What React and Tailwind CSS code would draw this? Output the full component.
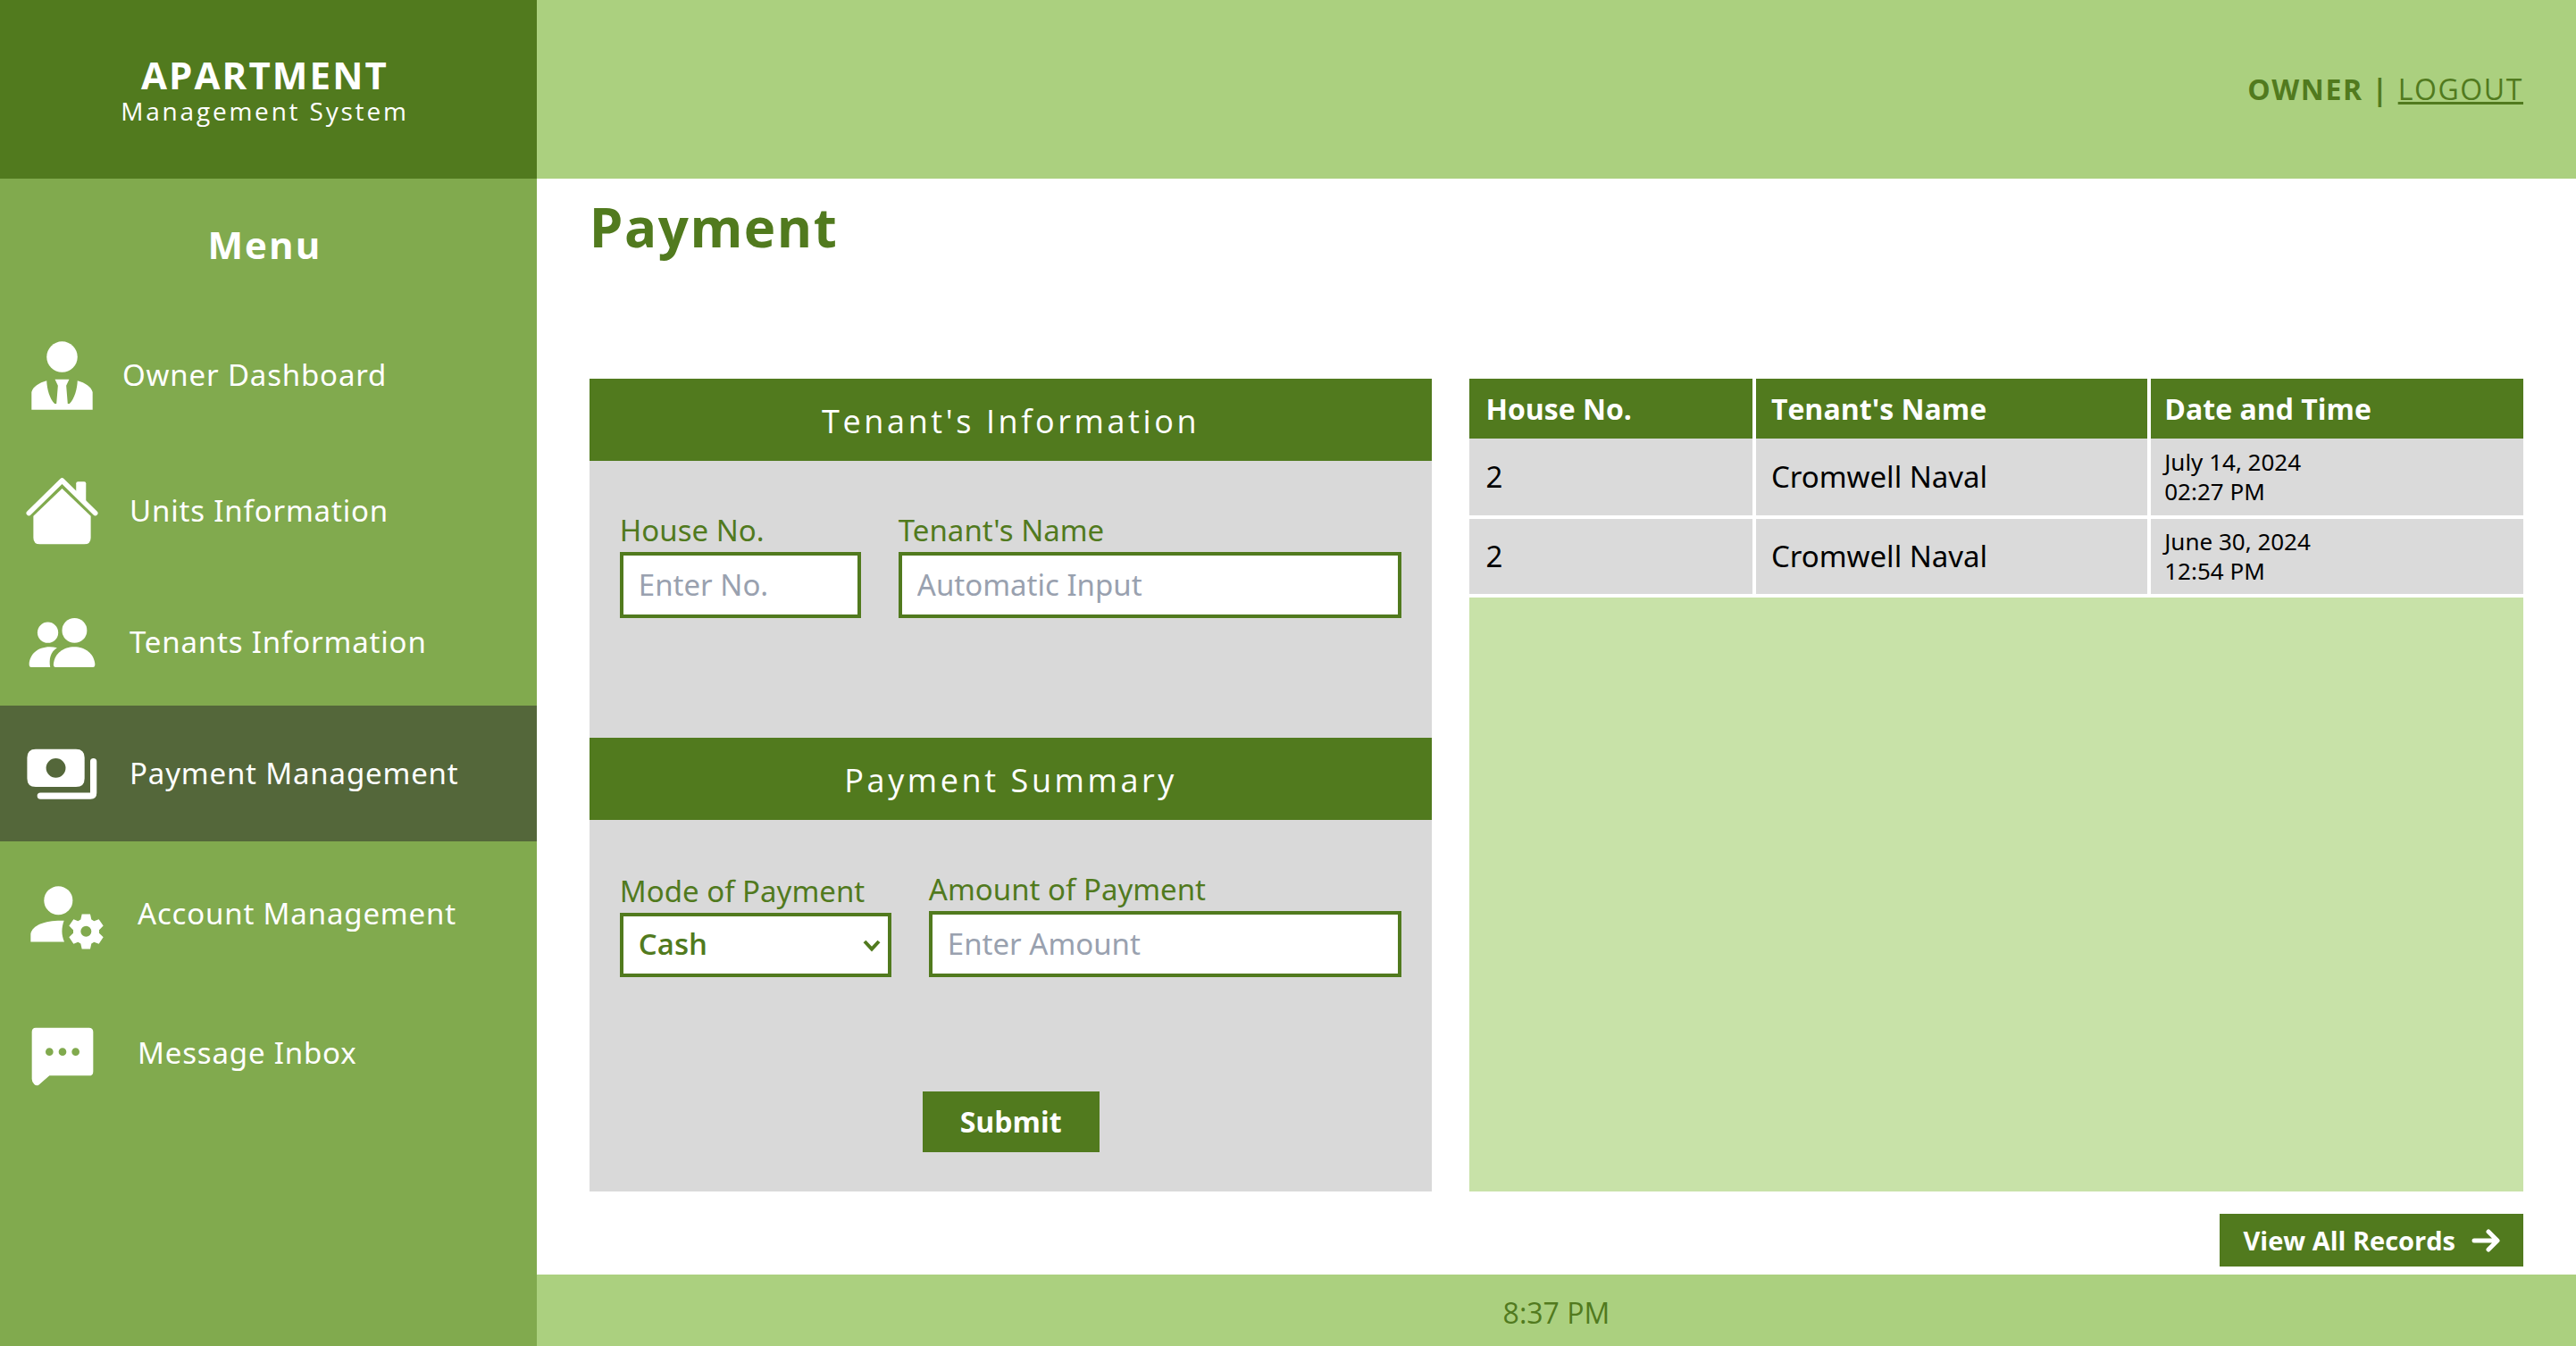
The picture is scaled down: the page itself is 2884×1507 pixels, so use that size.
import React from "react";

function OwnerIcon() {
  return (
    <svg viewBox="76 32 206 232" className="w-[69px] h-[77px]" fill="currentColor" aria-hidden="true">
      <circle cx="179" cy="85" r="52" />
      <path d="M76 263V204C80 185 102 172 127 165C128 192 137 226 154 243L160 243L165 182L155 161H203L193 182L198 243L204 243C221 226 230 192 231 165C256 172 278 185 282 204V263Z" />
    </svg>
  );
}

function HouseIcon() {
  return (
    <svg viewBox="58 494 242 224" className="w-[81px] h-[75px]" fill="currentColor" aria-hidden="true">
      <path d="M179 530L275 622V694Q275 716 253 716H105Q83 716 83 694V622Z" />
      <path d="M68 612L179 503L290 612" fill="none" stroke="currentColor" strokeWidth="17" strokeLinecap="round" strokeLinejoin="round" />
      <path d="M226 540V513Q226 507 232 507H253Q259 507 259 513V574Z" />
    </svg>
  );
}

function PeopleIcon() {
  return (
    <svg viewBox="66 26 226 170" className="w-[75px] h-[57px]" fill="currentColor" aria-hidden="true">
      <circle cx="131" cy="77" r="35" />
      <circle cx="221" cy="70" r="42" />
      <path d="M162 128C140 142 134 166 139 194H75Q68 194 68 184C70 146 105 116 162 128Z" />
      <path d="M157 194Q150 194 150 184C153 147 184 125 220 125S287 147 290 184Q290 194 283 194Z" />
    </svg>
  );
}

function MoneyIcon() {
  return (
    <svg viewBox="60 472 238 172" className="w-[79px] h-[57px]" fill="currentColor" aria-hidden="true">
      <path fillRule="evenodd" d="M90 474H226Q255 474 255 503V573Q255 602 226 602H90Q61 602 61 573V503Q61 474 90 474ZM158 505A33 33 0 1 0 158 571A33 33 0 1 0 158 505Z" />
      <path d="M274 516Q274 505 285 505T296 516V622Q296 643 275 643H106Q95 643 95 632T106 621H274Z" />
    </svg>
  );
}

function AccountIcon() {
  return (
    <svg viewBox="74 32 246 212" className="w-[82px] h-[71px]" fill="currentColor" aria-hidden="true">
      <circle cx="168" cy="80" r="48" />
      <path d="M187 148C178 172 178 196 188 219H75V192C82 162 125 146 187 148Z" />
      <path
        fillRule="evenodd"
        d="M247 126H275L279 144L288 149L304 143L319 165L305 179V190L319 203L304 226L288 220L279 225L275 243H247L243 225L234 220L219 226L204 203L218 190V179L204 165L219 143L234 149L243 144ZM261 166A18 18 0 1 0 261 202A18 18 0 1 0 261 166Z"
      />
    </svg>
  );
}

function MessageIcon() {
  return (
    <svg viewBox="74 512 210 198" className="w-[70px] h-[66px]" fill="currentColor" aria-hidden="true">
      <path
        fillRule="evenodd"
        d="M89 514H268Q282 514 282 528V661Q282 675 268 675H135L99 706Q91 711 84 704Q76 697 76 686V528Q76 514 89 514ZM135 582A13 13 0 1 0 135 608A13 13 0 1 0 135 582ZM179 582A13 13 0 1 0 179 608A13 13 0 1 0 179 582ZM223 582A13 13 0 1 0 223 608A13 13 0 1 0 223 582Z"
      />
    </svg>
  );
}

const menu = [
  { label: "Owner Dashboard", Icon: OwnerIcon, row: "h-[148px] gap-[27px]", slot: "w-[82px]" },
  { label: "Units Information", Icon: HouseIcon, row: "h-[154px] gap-[35px] pt-[2px]", slot: "w-[82px]" },
  { label: "Tenants Information", Icon: PeopleIcon, row: "h-[142px] gap-[35px]", slot: "w-[82px]" },
  { label: "Payment Management", Icon: MoneyIcon, row: "h-[152px] gap-[35px] bg-[#54673a]", slot: "w-[82px]", active: true },
  { label: "Account Management", Icon: AccountIcon, row: "h-[162px] gap-[32px]", slot: "w-[94px] pt-2" },
  { label: "Message Inbox", Icon: MessageIcon, row: "h-[150px] gap-[42px]", slot: "w-[84px] pt-2" },
];

const records = [
  { house: "2", name: "Cromwell Naval", date: "July 14, 2024", time: "02:27 PM" },
  { house: "2", name: "Cromwell Naval", date: "June 30, 2024", time: "12:54 PM" },
];

function Sidebar() {
  return (
    <aside className="w-5/24 shrink-0 bg-[#81aa4e] text-white">
      <div className="flex h-[200px] flex-col items-center justify-center bg-[#517a1e] pt-1 pr-2 font-['Open_Sans','Noto_Sans',sans-serif]">
        <p className="text-[42px] leading-[44px] font-bold tracking-wider">APARTMENT</p>
        <p className="text-[28px] leading-[36px] tracking-widest">Management System</p>
      </div>
      <h2 className="flex h-[146px] items-center justify-center pr-2 font-['Open_Sans','Noto_Sans',sans-serif] text-[42px] font-bold tracking-wider">
        Menu
      </h2>
      <nav>
        {menu.map(({ label, Icon, row, slot, active }) => (
          <a
            key={label}
            href="#"
            aria-current={active ? "page" : undefined}
            className={`flex items-center pl-[28px] text-[33px] tracking-wide whitespace-nowrap ${row}`}
          >
            <span className={`flex shrink-0 justify-center ${slot}`}>
              <Icon />
            </span>
            {label}
          </a>
        ))}
      </nav>
    </aside>
  );
}

const fieldClass =
  "w-full border-4 border-[#517a1e] bg-white px-[17px] pb-[2px] text-[33px] outline-none placeholder:text-gray-400";

const sectionTitleClass =
  "flex h-[92px] items-center justify-center bg-[#517a1e] pt-1 font-['Open_Sans','Noto_Sans',sans-serif] text-[36px] tracking-widest text-white";

function PaymentForm() {
  return (
    <form className="flex flex-col bg-[#d9d9d9] text-[33px] text-[#517a1e]" onSubmit={(e) => e.preventDefault()}>
      <h2 className={sectionTitleClass}>Tenant's Information</h2>
      <div className="flex h-[310px] gap-[42px] px-[34px] pt-[54px]">
        <div className="w-[270px]">
          <label htmlFor="house" className="block leading-[48px]">House No.</label>
          <input id="house" type="text" placeholder="Enter No." className={`block h-[74px] ${fieldClass}`} />
        </div>
        <div className="flex-1">
          <label htmlFor="tenant" className="block leading-[48px]">Tenant's Name</label>
          <input id="tenant" type="text" placeholder="Automatic Input" className={`block h-[74px] ${fieldClass}`} />
        </div>
      </div>
      <h2 className={sectionTitleClass}>Payment Summary</h2>
      <div className="flex flex-1 flex-col px-[34px] pt-[54px] pb-[44px]">
        <div className="flex items-end gap-[42px]">
          <div className="w-[304px]">
            <label htmlFor="mode" className="block leading-[48px] whitespace-nowrap">Mode of Payment</label>
            <div className="relative">
              <select id="mode" className={`block h-[72px] appearance-none font-['Open_Sans','Noto_Sans',sans-serif] font-semibold ${fieldClass}`}>
                <option>Cash</option>
              </select>
              <svg viewBox="0 0 20 14" className="pointer-events-none absolute top-[30px] right-[12px] h-[14px] w-[20px]" fill="none" stroke="currentColor" strokeWidth="4" aria-hidden="true">
                <path d="M2 2L10 10.500L18 2" />
              </svg>
            </div>
          </div>
          <div className="flex-1">
            <label htmlFor="amount" className="block leading-[48px]">Amount of Payment</label>
            <input id="amount" type="text" placeholder="Enter Amount" className={`block h-[74px] ${fieldClass}`} />
          </div>
        </div>
        <button
          type="submit"
          className="mt-auto h-[68px] self-center bg-[#517a1e] px-[42px] font-['Open_Sans','Noto_Sans',sans-serif] text-[32px] font-bold text-white"
        >
          Submit
        </button>
      </div>
    </form>
  );
}

function Records() {
  return (
    <div className="flex flex-col bg-[#c8e2a8]">
      <table className="w-full table-fixed border-collapse text-left text-[33px]">
        <colgroup>
          <col className="w-[27%]" />
          <col className="w-3/8" />
          <col />
        </colgroup>
        <thead className="font-['Open_Sans','Noto_Sans',sans-serif] text-[32px]">
          <tr className="h-[67px] bg-[#517a1e] text-white">
            <th className="border-r-4 border-white px-[18px] font-bold">House No.</th>
            <th className="border-r-4 border-white px-[17px] font-bold">Tenant's Name</th>
            <th className="px-[15px] font-bold">Date and Time</th>
          </tr>
        </thead>
        <tbody>
          {records.map((r) => (
            <tr key={r.date} className="h-[88px] border-b-4 border-white bg-[#dadada] text-black">
              <td className="border-r-4 border-white px-[18px]">{r.house}</td>
              <td className="border-r-4 border-white px-[17px]">{r.name}</td>
              <td className="px-[15px] text-[26px] leading-[33px]">
                {r.date}
                <br />
                {r.time}
              </td>
            </tr>
          ))}
        </tbody>
      </table>
    </div>
  );
}

export default function App() {
  return (
    <div className="flex min-h-screen bg-white font-['Noto_Sans','Open_Sans',sans-serif]">
      <Sidebar />
      <div className="flex flex-1 flex-col">
        <header className="flex h-[200px] items-center justify-end bg-[#abd07f] px-[59px] font-['Open_Sans','Noto_Sans',sans-serif] text-[32px] text-[#517a1e]">
          <p className="tracking-wider">
            <span className="font-bold">OWNER |</span>{" "}
            <a href="#" className="underline">LOGOUT</a>
          </p>
        </header>
        <main className="flex flex-1 flex-col px-[59px] text-[#517a1e]">
          <h1 className="h-[224px] pt-[14px] font-['Open_Sans','Noto_Sans',sans-serif] text-[60px] leading-[80px] font-bold tracking-wide">
            Payment
          </h1>
          <div className="grid flex-1 grid-cols-[4fr_5fr] gap-[42px]">
            <PaymentForm />
            <Records />
          </div>
          <div className="flex h-[93px] items-center justify-end pt-[16px]">
            <button
              type="button"
              className="flex h-[59px] items-center gap-[18px] bg-[#517a1e] px-[26px] font-['Open_Sans','Noto_Sans',sans-serif] text-[29px] font-bold text-white"
            >
              View All Records
              <svg viewBox="0 0 32 26" className="h-[26px] w-[32px]" fill="none" stroke="currentColor" strokeWidth="5" strokeLinecap="round" strokeLinejoin="round" aria-hidden="true">
                <path d="M3 13H28M19 3L29 13L19 23" />
              </svg>
            </button>
          </div>
        </main>
        <footer className="flex h-[80px] items-center justify-center bg-[#abd07f] pt-[6px] font-['Open_Sans','Noto_Sans',sans-serif] text-[32px] text-[#517a1e]">
          8:37 PM
        </footer>
      </div>
    </div>
  );
}
